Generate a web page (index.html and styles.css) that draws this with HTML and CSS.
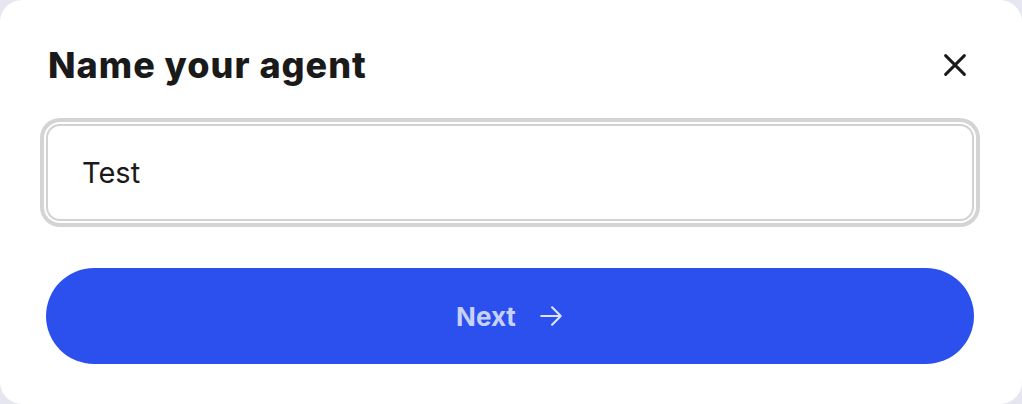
FILE: index.html
```html
<!DOCTYPE html>
<html lang="en">
<head>
<meta charset="utf-8">
<title>Name your agent</title>
<link rel="stylesheet" href="styles.css">
</head>
<body>
<div class="card">
  <div class="header">
    <h1 class="title">Name your agent</h1>
    <button class="close" aria-label="Close">
      <svg width="30" height="30" viewBox="0 0 24 24" fill="none" stroke="#1a1a1a" stroke-width="2.4" stroke-linecap="round"><path d="M4.5 4.5L19.5 19.5M19.5 4.5L4.5 19.5"/></svg>
    </button>
  </div>
  <div class="field">
    <input class="input" type="text" value="Test">
  </div>
  <button class="next">
    <span>Next</span>
    <svg width="26" height="26" viewBox="0 0 24 24" fill="none" stroke="currentColor" stroke-width="2" stroke-linecap="round" stroke-linejoin="round"><path d="M3 12H21M13 4L21 12L13 20"/></svg>
  </button>
</div>
</body>
</html>
```

FILE: styles.css
```css
html, body {
  margin: 0;
  padding: 0;
  height: 100%;
}
body {
  background: #e6e6f0;
  font-family: Inter, "Noto Sans", sans-serif;
  overflow: hidden;
}
.card {
  box-sizing: border-box;
  width: 1022px;
  height: 404px;
  background: #ffffff;
  border-radius: 22px;
  padding: 45px 48px 0 46px;
  display: flex;
  flex-direction: column;
}
.header {
  display: flex;
  align-items: center;
  justify-content: space-between;
  height: 40px;
}
.title {
  margin: 0 0 0 2px;
  font-size: 36px;
  line-height: 40px;
  font-weight: 800;
  color: #1a1a1a;
  letter-spacing: 1px;
}
.close {
  border: 0;
  background: transparent;
  padding: 0;
  margin-right: 4px;
  width: 30px;
  height: 30px;
  display: flex;
  align-items: center;
  justify-content: center;
  cursor: pointer;
}
.field {
  margin-top: 39px;
}
.input {
  box-sizing: border-box;
  width: 100%;
  height: 97px;
  border: 2px solid #d2d2d2;
  border-radius: 14px;
  box-shadow: 0 0 0 2px #ffffff, 0 0 0 6px #d4d4d4;
  padding: 0 34px;
  font-family: Inter, "Noto Sans", sans-serif;
  font-size: 29px;
  color: #1a1a1a;
  outline: none;
  background: #fff;
}
.next {
  margin-top: 47px;
  height: 96px;
  width: 100%;
  border: 0;
  border-radius: 48px;
  background: #2b50ed;
  color: #c6d2fb;
  font-family: Inter, "Noto Sans", sans-serif;
  font-size: 26px;
  font-weight: 700;
  display: flex;
  align-items: center;
  justify-content: center;
  gap: 22px;
  cursor: pointer;
}
.next svg {
  color: #dbe3fd;
}
```
